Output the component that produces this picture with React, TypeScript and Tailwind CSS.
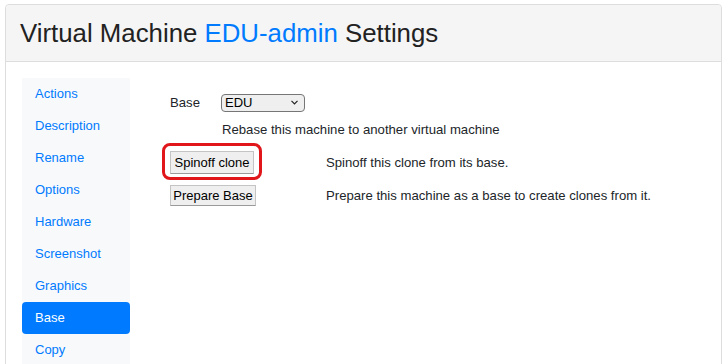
import React from "react";

const items = ["Actions", "Description", "Rename", "Options", "Hardware", "Screenshot", "Graphics", "Base", "Copy"];

export default function App() {
  return (
    <div className="min-h-[364px] bg-white pt-[4px] pl-[5px] pr-[3px] font-['Liberation_Sans',Arial,sans-serif] text-[#212529]">
      <div className="rounded-[4px] border border-[#dddddd] min-h-[400px]">
        <div className="h-[57px] bg-[#f5f5f5] border-b border-[#dddddd] rounded-t-[4px] pl-[14px] pt-[13px]">
          <h1 className="text-[25.8px] leading-[30px] text-[#222]">
            Virtual Machine <span className="text-[#007bff]">EDU-admin</span> Settings
          </h1>
        </div>
        <div className="flex p-[16px]">
          <nav className="w-[108px] bg-[#f8f9fa] flex flex-col">
            {items.map((it) => (
              <div
                key={it}
                className={
                  "h-[32px] flex items-center pl-[13px] text-[13px] rounded-[4px] " +
                  (it === "Base" ? "bg-[#007bff] text-white" : "text-[#007bff]")
                }
              >
                {it}
              </div>
            ))}
          </nav>
          <div className="pl-[40px] pt-[16px] text-[13.15px] text-[#212529]">
            <div className="flex items-center h-[18px]">
              <span className="w-[51px]">Base</span>
              <div className="relative">
                <select className="appearance-none w-[84px] h-[18px] border border-[#767676] rounded-[4px] bg-[#efefef] pl-[3px] text-[13px] leading-[16px] font-['Liberation_Sans',Arial,sans-serif] font-medium text-black">
                  <option>EDU</option>
                </select>
                <svg className="absolute right-[7px] top-[7px] pointer-events-none" width="7" height="5" viewBox="0 0 7 5">
                  <path d="M0.5 0.8 L3.5 3.8 L6.5 0.8" fill="none" stroke="#222" strokeWidth="1.2" />
                </svg>
              </div>
            </div>
            <div className="pl-[52px] mt-[10px] leading-[15px]">Rebase this machine to another virtual machine</div>
            <div className="flex items-center mt-[14px]">
              <div className="w-[156px]">
                <span className="relative inline-block">
                  <button className="h-[23px] w-[84px] bg-[#efefef] border border-[#c4c4c4] border-b-[#9a9a9a] text-[13px] text-black">
                    Spinoff clone
                  </button>
                  <span className="absolute left-[-8px] top-[-8px] w-[100px] h-[37px] border-[3px] border-[#e0161b] rounded-[8px] pointer-events-none" />
                </span>
              </div>
              <span>Spinoff this clone from its base.</span>
            </div>
            <div className="flex items-center mt-[11px]">
              <div className="w-[156px]">
                <button className="h-[21px] w-[86px] bg-[#efefef] border border-[#c4c4c4] border-b-[#9a9a9a] text-[13px] text-black">
                  Prepare Base
                </button>
              </div>
              <span>Prepare this machine as a base to create clones from it.</span>
            </div>
          </div>
        </div>
      </div>
    </div>
  );
}
